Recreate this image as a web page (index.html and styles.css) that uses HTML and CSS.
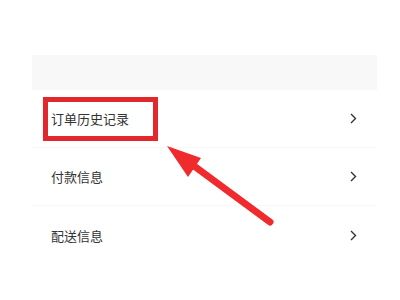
FILE: index.html
```html
<!DOCTYPE html>
<html lang="zh">
<head>
<meta charset="utf-8">
<link rel="stylesheet" href="styles.css">
</head>
<body>
<div class="page">
  <div class="list">
    <div class="band"></div>
    <div class="row"><span class="label">订单历史记录</span><svg class="chev" width="7" height="11" viewBox="0 0 7 11"><path d="M1 1 L5.5 5.5 L1 10" fill="none" stroke="#333" stroke-width="1.4"/></svg></div>
    <div class="row"><span class="label">付款信息</span><svg class="chev" width="7" height="11" viewBox="0 0 7 11"><path d="M1 1 L5.5 5.5 L1 10" fill="none" stroke="#333" stroke-width="1.4"/></svg></div>
    <div class="row last"><span class="label">配送信息</span><svg class="chev" width="7" height="11" viewBox="0 0 7 11"><path d="M1 1 L5.5 5.5 L1 10" fill="none" stroke="#333" stroke-width="1.4"/></svg></div>
  </div>
  <div class="hl-box"></div>
  <svg class="arrow" width="400" height="300" viewBox="0 0 400 300">
    <line x1="270" y1="222" x2="190" y2="163" stroke="#ef2b2d" stroke-width="7" stroke-linecap="round"/>
    <polygon points="167,146 201,158 188,177" fill="#ef2b2d"/>
  </svg>
</div>
</body>
</html>
```
FILE: styles.css
```css
html, body {
  margin: 0;
  padding: 0;
  background: #ffffff;
}
.page {
  position: relative;
  width: 400px;
  height: 300px;
  overflow: hidden;
  font-family: "Noto Sans CJK SC", "Noto Sans", sans-serif;
}
.list {
  margin-left: 32px;
  width: 345px;
  padding-top: 55px;
}
.band {
  height: 35px;
  background: #f8f8f8;
}
.row {
  height: 58px;
  display: flex;
  align-items: center;
  justify-content: space-between;
  padding-left: 19px;
  padding-right: 20px;
  border-bottom: 1px solid #f8f8f8;
  box-sizing: border-box;
}
.row:first-of-type {
  height: 59px;
}
.row.last {
  border-bottom: none;
}
.label {
  font-size: 13px;
  color: #333333;
  line-height: 1;
}
.chev {
  display: block;
}
.hl-box {
  position: absolute;
  left: 43px;
  top: 97px;
  width: 115px;
  height: 44px;
  box-sizing: border-box;
  border: 5px solid #e2282c;
}
.arrow {
  position: absolute;
  left: 0;
  top: 0;
}
```
